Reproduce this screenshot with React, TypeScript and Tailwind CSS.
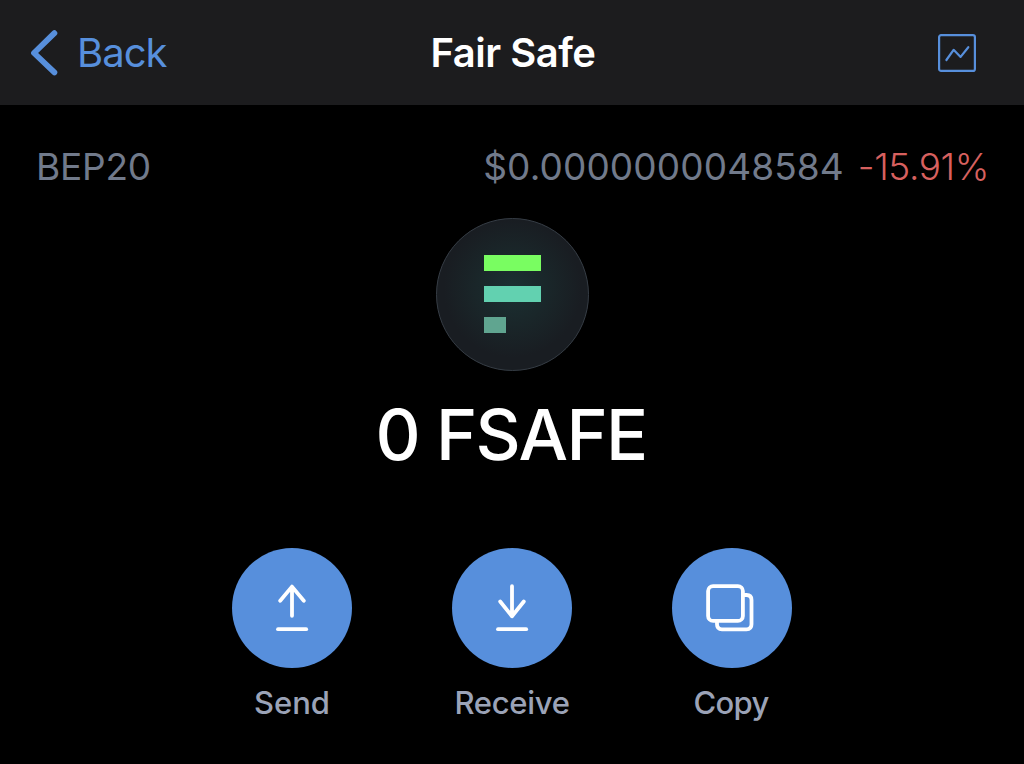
import type { ReactNode } from "react";

function BackIcon() {
  return (
    <svg className="w-[30px] h-[48px]" viewBox="0 0 30 48" fill="none" stroke="currentColor" strokeWidth="5.8" strokeLinecap="round" strokeLinejoin="round">
      <path d="M25.4 4.2L5 24L25.4 43.4" />
    </svg>
  );
}

function ChartIcon() {
  return (
    <svg className="w-10 h-10" viewBox="0 0 40 40" fill="none" stroke="currentColor" strokeWidth="2.2" strokeLinecap="round" strokeLinejoin="round">
      <rect x="2.1" y="2.1" width="35.8" height="35.8" rx="2" />
      <path d="M9.4 27L16.6 16.8L23.6 23.9L31.3 14.2" />
    </svg>
  );
}

function SendIcon() {
  return (
    <svg className="w-12 h-12" viewBox="0 0 48 48" fill="none" stroke="currentColor" strokeWidth="3.8" strokeLinecap="round" strokeLinejoin="round">
      <path d="M24 31.8V2.6M12.2 16.8L24 2.6L35.8 16.8" />
      <path d="M10 45.2H38.2" />
    </svg>
  );
}

function ReceiveIcon() {
  return (
    <svg className="w-12 h-12" viewBox="0 0 48 48" fill="none" stroke="currentColor" strokeWidth="3.8" strokeLinecap="round" strokeLinejoin="round">
      <path d="M24 2.2V32.3M12.2 17.5L24 32.3L35.8 17.5" />
      <path d="M10 45.2H38.2" />
    </svg>
  );
}

function CopyIcon() {
  return (
    <svg className="w-12 h-12 mr-1" viewBox="0 0 48 48" fill="none" stroke="currentColor" strokeWidth="3.8" strokeLinecap="round" strokeLinejoin="round">
      <rect x="2.1" y="2.1" width="34.8" height="34.8" rx="5" />
      <path d="M37.5 11H40.5Q45.5 11 45.5 16V40.3Q45.5 45.3 40.5 45.3H16Q11 45.3 11 40.3V37.5" />
    </svg>
  );
}

const actions: { label: string; icon: ReactNode; tracking: string }[] = [
  { label: "Send", icon: <SendIcon />, tracking: "tracking-[0px]" },
  { label: "Receive", icon: <ReceiveIcon />, tracking: "tracking-[-0.3px]" },
  { label: "Copy", icon: <CopyIcon />, tracking: "tracking-[-0.7px] pr-[2px]" },
];

export default function App() {
  return (
    <div className="w-full h-screen overflow-hidden bg-black font-['Inter',sans-serif]">
      <header className="h-[105px] grid grid-cols-3 items-center bg-[#1c1c1e] pl-[29px] pr-[47px]">
        <button className="flex items-center gap-[18px] text-[#578fdc]">
          <BackIcon />
          <span className="text-[40px] leading-[48px] tracking-[-1px]">Back</span>
        </button>
        <h1 className="text-center text-[40px] leading-[48px] font-semibold tracking-[-0.5px] text-white whitespace-nowrap pl-5">Fair Safe</h1>
        <button className="justify-self-end text-[#578fdc]" aria-label="Chart">
          <ChartIcon />
        </button>
      </header>

      <main className="flex flex-col items-center pt-[30px]">
        <div className="w-full h-16 flex items-center justify-between pl-9 pr-[35px] text-[37px] text-[#717a8b]">
          <span className="tracking-[-0.2px]">BEP20</span>
          <div className="flex gap-[14px]">
            <span className="tracking-[0.12px]">$0.0000000048584</span>
            <span className="font-light tracking-[-0.4px] text-[#d7605f]">-15.91%</span>
          </div>
        </div>

        <div className="mt-[19px] size-[153px] rounded-full border border-[#353c44] bg-[#191d22] bg-[radial-gradient(circle_at_50%_46%,#1b3032_0%,#1a272a_30%,#191d22_62%)] pt-9 pl-[47px] flex flex-col gap-[15px]">
          <div className="w-[57px] h-4 bg-[#79fd61]" />
          <div className="w-[57px] h-4 bg-[#62d1b0]" />
          <div className="w-[22px] h-4 bg-[#60a590]" />
        </div>

        <p className="mt-6 pr-[2px] text-[70px] leading-[80px] font-medium tracking-[-1.75px] text-white whitespace-nowrap">0 FSAFE</p>

        <div className="mt-[73px] flex gap-[100px]">
          {actions.map(({ label, icon, tracking }) => (
            <button key={label} className="w-[120px] flex flex-col items-center">
              <span className="size-[120px] rounded-full bg-[#578fdc] text-white flex items-center justify-center">{icon}</span>
              <span className={`mt-[15px] text-[31px] leading-10 font-medium text-[#9ba3b7] ${tracking}`}>{label}</span>
            </button>
          ))}
        </div>
      </main>
    </div>
  );
}
